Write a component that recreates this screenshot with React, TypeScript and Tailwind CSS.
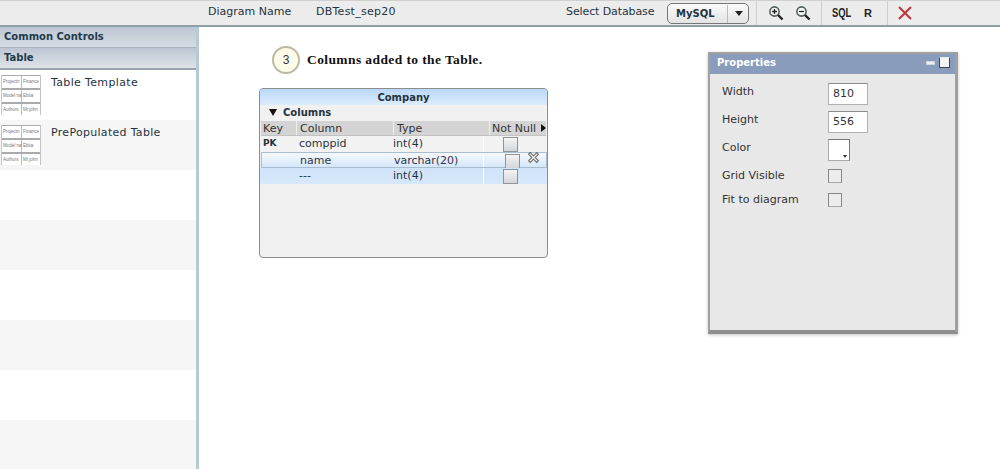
import React from "react";

const Thumb = () => (
  <div className="w-10 h-10 border-x border-[#c4c4c4] bg-white flex flex-col overflow-hidden font-['Liberation_Sans',sans-serif] text-[4.5px] leading-[12px] text-[#777] shrink-0">
    {[["Projectn", "Finance"], ["Model na", "Ebita"], ["Authors", "Mr.john"]].map((r) => (
      <div key={r[0]} className="h-[14px] flex border-y border-[#aaa] whitespace-nowrap">
        <span className="w-[20px] pl-[1px] border-r border-[#bbb] shrink-0">{r[0]}</span>
        <span className="pl-[1px]">{r[1]}</span>
      </div>
    ))}
  </div>
);

const Sep = () => <div className="w-px h-6 bg-[#cfcfcf]" />;

const Box = ({ className = "" }: { className?: string }) => (
  <div className={"w-[15px] h-[15px] border border-[#8f9498] bg-gradient-to-b from-[#f4f4f4] to-[#d4d6d9] " + className} />
);

const Mag = ({ plus }: { plus: boolean }) => (
  <svg width="16" height="16" viewBox="0 0 16 16" fill="none">
    <circle cx="6.5" cy="6.5" r="4.6" stroke="#4f5d58" strokeWidth="1.6" fill="#f4f6f4" />
    <path d="M10 10l4.5 4.5" stroke="#222" strokeWidth="2.4" />
    <path d={plus ? "M4 6.5h5M6.5 4v5" : "M4 6.5h5"} stroke="#222" strokeWidth="1.3" />
  </svg>
);

const rows = [
  { key: "PK", name: "comppid", type: "int(4)" },
  { key: "", name: "name", type: "varchar(20)" },
  { key: "", name: "---", type: "int(4)" },
];

export default function App() {
  return (
    <div className="w-[1000px] h-[469px] overflow-hidden bg-white flex flex-col text-[11px] text-[#1f3440] font-['DejaVu_Sans',sans-serif]">
      {/* toolbar */}
      <div className="h-[27px] shrink-0 flex bg-[#ececec] border-t border-[#d0d0d0] border-b-2 border-b-[#8f9fa8]">
        <span className="ml-[208px] mt-[3px] w-[108px]">Diagram Name</span>
        <span className="mt-[3px] w-[250px] tracking-[0.25px]">DBTest_sep20</span>
        <span className="mt-[3px] w-[101px] tracking-[-0.1px]">Select Database</span>
        <div className="mt-[2px] w-[82px] h-[21px] flex items-center border border-[#777] rounded-[5px] bg-gradient-to-b from-[#fafafa] to-[#e4e4e4] font-bold text-[10px]">
          <span className="ml-[8px] w-[51px]">MySQL</span>
          <span className="w-px h-[18px] bg-[#bbb]" />
          <span className="ml-[7px] w-0 h-0 border-x-[4px] border-x-transparent border-t-[5px] border-t-[#222]" />
        </div>
        <div className="ml-[7px] h-[24px] flex items-center">
          <Sep />
          <div className="ml-[11px]"><Mag plus /></div>
          <div className="ml-[11px]"><Mag plus={false} /></div>
          <div className="ml-[10px]"><Sep /></div>
          <span className="ml-[10px] w-[22px] font-bold font-['Liberation_Sans',sans-serif] text-[12px] text-[#222] scale-x-[0.78] origin-left">SQL</span>
          <span className="ml-[10px] w-[10px] font-bold font-['Liberation_Sans',sans-serif] text-[11px] text-[#222]">R</span>
          <div className="ml-[13px]"><Sep /></div>
          <svg className="ml-[9px]" width="16" height="16" viewBox="0 0 16 16">
            <path d="M2 2l12 12M14 2L2 14" stroke="#c0353a" strokeWidth="2" />
          </svg>
        </div>
      </div>

      <div className="flex-1 flex min-h-0">
        {/* sidebar */}
        <div className="w-[199px] shrink-0 border-r-[3px] border-[#b4cbd3] flex flex-col overflow-hidden">
          <div className="h-[21px] shrink-0 flex items-center pl-1 pb-[2px] font-bold text-[10px] text-[#1f3a4d] bg-gradient-to-b from-[#bcc6d3] to-[#d6dce2] border-b border-[#aab2bc]">Common Controls</div>
          <div className="h-[22px] shrink-0 flex items-center pl-1 pb-[2px] font-bold text-[10px] text-[#1f3a4d] bg-gradient-to-b from-[#bcc6d3] to-[#dfe3e8] border-b-2 border-[#9aa3ad]">Table</div>
          <div className="h-[50px] shrink-0 flex pt-[5px] pl-[1px]">
            <Thumb />
            <span className="ml-[10px] tracking-[0.35px]">Table Template</span>
          </div>
          <div className="h-[50px] shrink-0 flex pt-[5px] pl-[1px] bg-[#f6f6f6]">
            <Thumb />
            <span className="ml-[10px] tracking-[0.3px]">PrePopulated Table</span>
          </div>
          <div className="h-[50px] shrink-0" />
          <div className="h-[50px] shrink-0 bg-[#f6f6f6]" />
          <div className="h-[50px] shrink-0" />
          <div className="h-[50px] shrink-0 bg-[#f6f6f6]" />
          <div className="h-[50px] shrink-0" />
          <div className="h-[50px] shrink-0 bg-[#f6f6f6]" />
        </div>

        {/* canvas */}
        <div className="relative flex-1">
          <div className="absolute left-[73px] top-[19px] flex items-center">
            <div className="w-7 h-7 rounded-full border-2 border-[#bdb9a4] bg-[#fdfce8] flex items-center justify-center text-[#333] font-['Liberation_Sans',sans-serif] text-[12px]">3</div>
            <span className="ml-[7px] font-['Liberation_Serif',serif] font-bold text-[13.5px] text-[#111] tracking-[0.4px]">Columns added to the Table.</span>
          </div>

          {/* table node */}
          <div className="absolute left-[60px] top-[61px] w-[289px] h-[170px] rounded-[4px] border border-[#8c8c8c] bg-[#f0f0f0] overflow-hidden">
            <div className="h-[16px] pt-[2px] leading-[13px] text-center font-bold text-[10px] text-[#1f3440] bg-gradient-to-b from-[#b9d8f8] to-[#dcecfb]">Company</div>
            <div className="h-[16px] flex items-center pl-[9px] pb-[2px] font-bold text-[10px] text-[#1f3440] bg-[#f1f1f1]">
              <span className="w-0 h-0 border-x-[4px] border-x-transparent border-t-[7px] border-t-[#111]" />
              <span className="ml-[6px]">Columns</span>
            </div>
            <div className="h-[15px] ml-[1px] mr-[1px] flex bg-[#d4d4d4] text-[#333] leading-[15px] border-b border-[#c2c2c2]">
              <span className="w-[36px] pl-[2px] border-r border-[#f0f0f0]">Key</span>
              <span className="w-[97px] pl-[3px] border-r border-[#f0f0f0]">Column</span>
              <span className="w-[96px] pl-[3px] border-r border-[#f0f0f0]">Type</span>
              <span className="flex-1 pl-[2px] whitespace-nowrap">Not Null</span>
              <span className="mt-[3px] w-0 h-0 border-y-[4px] border-y-transparent border-l-[5px] border-l-[#111]" />
            </div>
            {rows.map((r, i) => (
              <div
                key={r.name}
                className={
                  "relative flex items-center " +
                  (i === 0
                    ? "h-[16px] bg-[#f2f2f2]"
                    : i === 1
                    ? "h-[16px] pt-[2px] ml-[1px] border border-[#a9bdd0] bg-gradient-to-b from-[#f5f9fd] to-[#d5e7fa] text-[#334]"
                    : "h-[16px] bg-gradient-to-b from-[#cfe3f9] to-[#d6e8fb]")
                }
              >
                <span className="w-[37px] pl-[3px] text-[9px] font-bold">{r.key}</span>
                <span className={i === 1 ? "w-[95px] pl-[1px]" : "w-[96px] pl-[2px]"}>{r.name}</span>
                <span className={i === 1 ? "w-[89px]" : "w-[90px]"}>{r.type}</span>
                <span className={"h-full w-px bg-white " + (i === 1 ? "mr-[21px]" : "mr-[19px]")} />
                <Box />
                {i === 1 && (
                  <svg className="absolute left-[265px] top-[-2px]" width="13" height="13" viewBox="0 0 12 12" fill="#fff" stroke="#6f6f6f" strokeWidth="1">
                    <path d="M1.5 3L3 1.5 6 4.5 9 1.5 10.5 3 7.5 6 10.5 9 9 10.5 6 7.5 3 10.5 1.5 9 4.5 6z" />
                  </svg>
                )}
              </div>
            ))}
          </div>

          {/* properties window */}
          <div className="absolute left-[509px] top-[25px] w-[250px] h-[282px] border-2 border-[#a0a0a0] border-b-[4px] border-b-[#8e8e8e] border-r-[3px] bg-[#e8e8e8] shadow-[0_1px_3px_rgba(0,0,0,0.25)]">
            <div className="h-[20px] flex items-center pl-[7px] pb-[3px] bg-[#8a9cbc] text-white font-bold text-[10px]">
              <span className="flex-1">Properties</span>
              <span className="w-[9px] h-[4px] bg-[#eef0f2] border border-[#d0d4dc]" />
              <span className="ml-[4px] mr-[5px] w-[11px] h-[11px] bg-[#f3f4f6] border border-[#3d4654] border-t-[#e8e8e8] rounded-[1px]" />
            </div>
            <div className="pl-[12px] pt-[9px] text-[#333]">
              <div className="h-[28px] flex">
                <span className="w-[106px] pt-[1px]">Width</span>
                <div className="w-[40px] h-[22px] bg-white border border-[#b0b0b0] border-t-[#8c8c8c] pl-[4px] leading-[20px]">810</div>
              </div>
              <div className="h-[28px] flex">
                <span className="w-[106px] pt-[1px]">Height</span>
                <div className="w-[40px] h-[22px] bg-white border border-[#b0b0b0] border-t-[#8c8c8c] pl-[4px] leading-[20px]">556</div>
              </div>
              <div className="h-[29px] flex">
                <span className="w-[106px] pt-[1px]">Color</span>
                <div className="relative w-[22px] h-[22px] bg-white border border-[#aaa] border-t-[#777] border-r-[#777]">
                  <span className="absolute right-[2px] bottom-[2px] w-0 h-0 border-x-[2px] border-x-transparent border-t-[3px] border-t-[#333]" />
                </div>
              </div>
              <div className="h-[24px] flex">
                <span className="w-[106px]">Grid Visible</span>
                <div className="mt-[1px] w-[14px] h-[14px] border border-[#888] border-b-[#aaa] bg-[#ececec]" />
              </div>
              <div className="h-[24px] flex">
                <span className="w-[106px]">Fit to diagram</span>
                <div className="mt-[1px] w-[14px] h-[14px] border border-[#888] border-b-[#aaa] bg-[#ececec]" />
              </div>
            </div>
          </div>
        </div>
      </div>
    </div>
  );
}
